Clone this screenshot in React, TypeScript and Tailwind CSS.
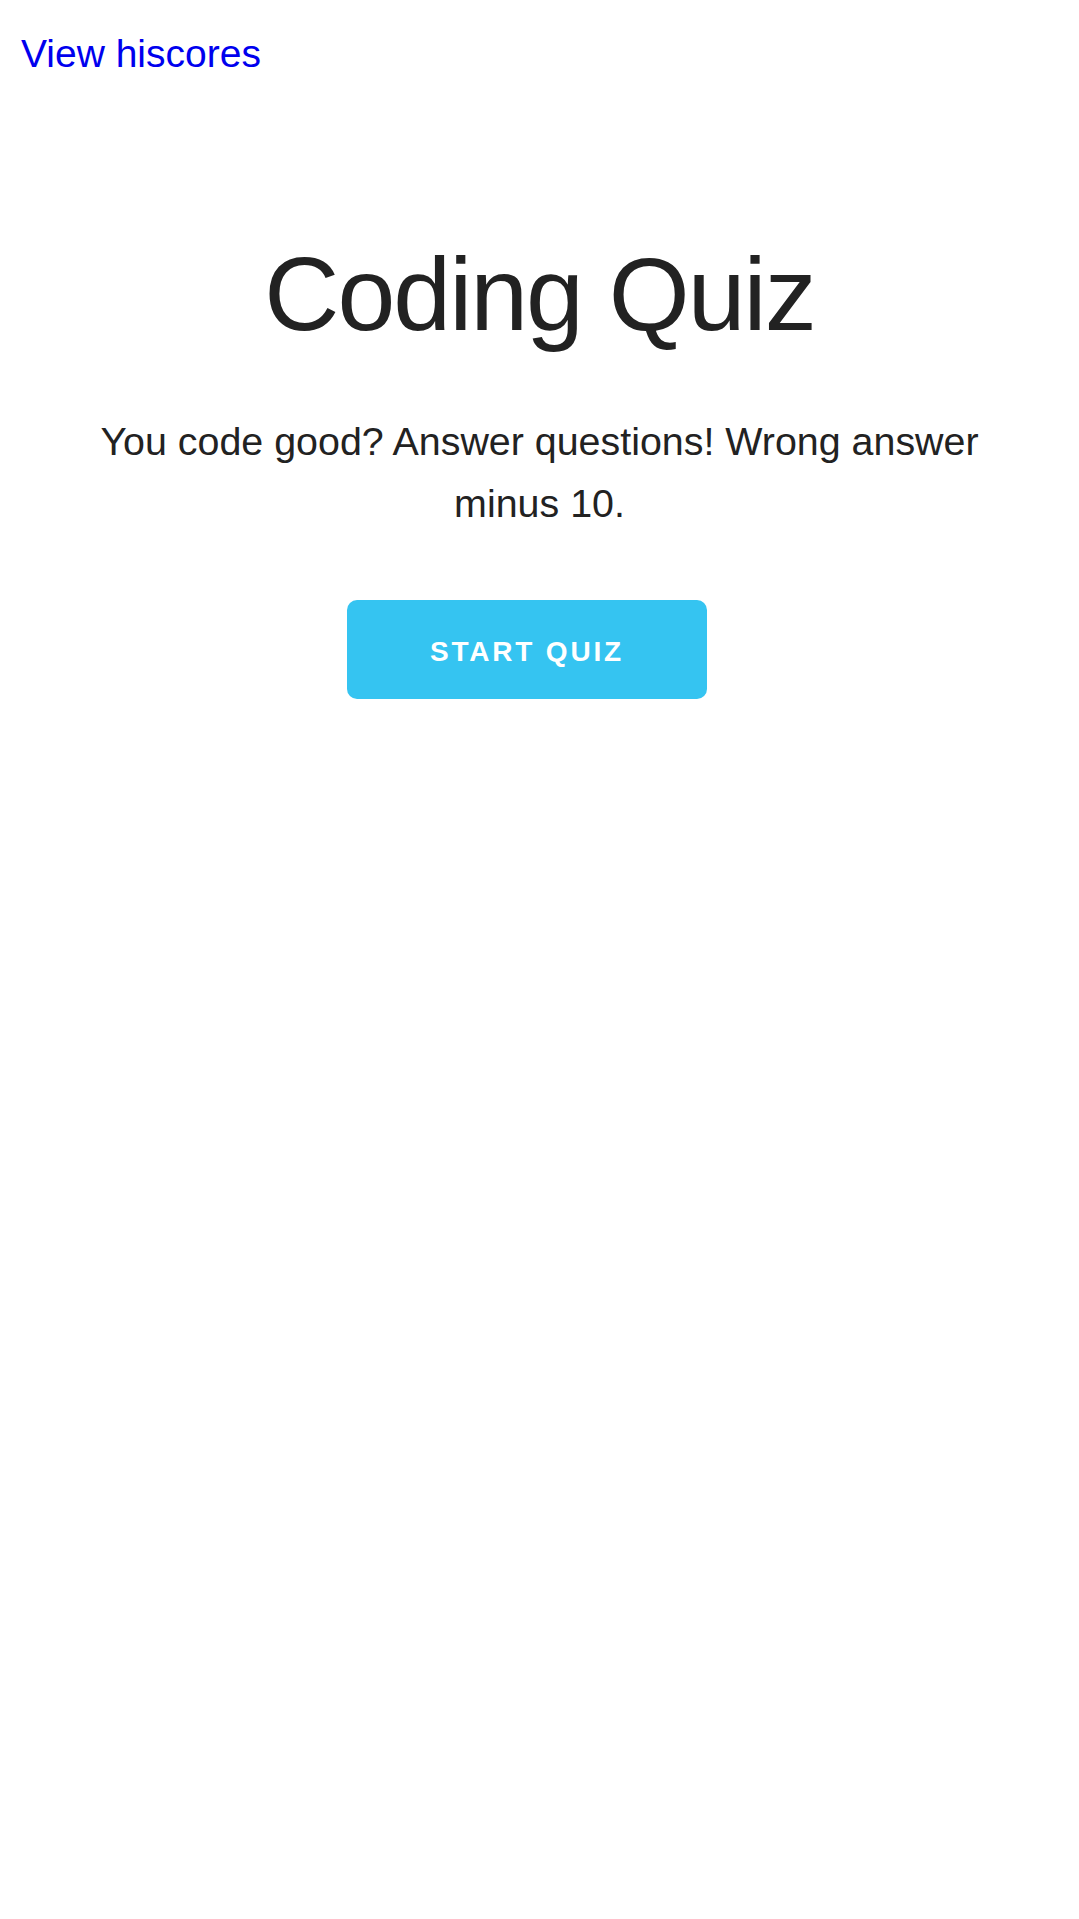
const App = () => {
  return (
    <div className="min-h-screen bg-white font-['Liberation_Sans',Arial,sans-serif] text-[#222222]">
      <header className="pl-[21px] pt-[31px]">
        <a href="#" className="text-[39px] leading-[45px] text-[#0000ee]">
          View hiscores
        </a>
      </header>

      <main className="flex flex-col items-center">
        <h1 className="mt-[166px] text-[104px] leading-none tracking-[-2px]">Coding Quiz</h1>
        <p className="mt-[64px] px-[85px] text-center text-[39.4px] leading-[62px]">
          You code good? Answer questions! Wrong answer minus 10.
        </p>
        <div className="mt-[66px] flex w-full justify-center pr-[25px]">
          <button className="h-[99px] w-[360px] rounded-[10px] bg-[#35c4f1] pt-[5px] text-[28px] font-bold uppercase tracking-[0.1em] text-white">
            Start Quiz
          </button>
        </div>
      </main>
    </div>
  );
};

export default App;
